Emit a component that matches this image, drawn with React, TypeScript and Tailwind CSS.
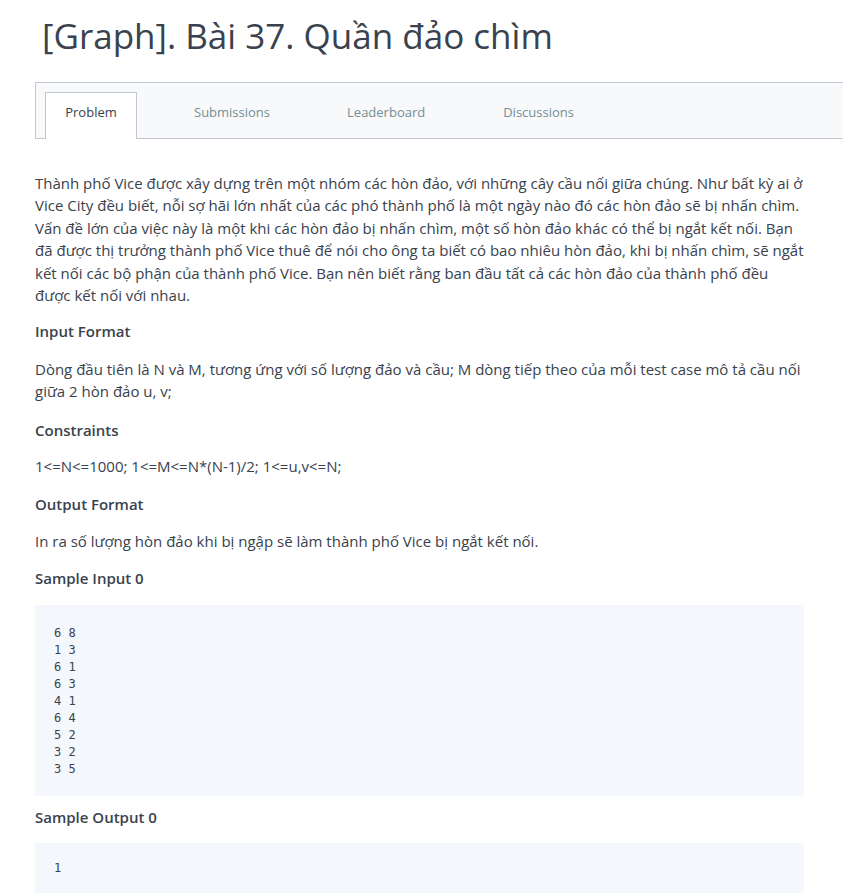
export default function App() {
  const sample = ["6 8", "1 3", "6 1", "6 3", "4 1", "6 4", "5 2", "3 2", "3 5"];

  return (
    <div className="min-h-screen bg-white text-[#39424e] font-['Open_Sans',sans-serif]">
      <h1 className="pl-[42px] pt-[12px] text-[35px] leading-[48px] font-normal">
        [Graph]. Bài 37. Quần đảo chìm
      </h1>

      <div className="ml-[35px] mt-[22px] h-[57px] border border-r-0 border-[#c2c7d0] bg-[#f8f9fa] flex items-end">
        <div className="ml-[9px] h-[47px] w-[92px] -mb-px bg-white border border-b-0 border-[#c2c7d0] flex justify-center pt-[10px] text-[13px] leading-[18px] text-[#39424e]">
          Problem
        </div>
        <div className="self-start pt-[20px] flex text-[13px] leading-[18px] text-[#738f93]">
          <span className="ml-[57px]">Submissions</span>
          <span className="ml-[77px]">Leaderboard</span>
          <span className="ml-[78px]">Discussions</span>
        </div>
      </div>

      <div className="ml-[35px] w-[769px] pt-[33px] text-[15px] leading-[22.4px] text-[#39424e]">
        <p>
          Thành phố Vice được xây dựng trên một nhóm các hòn đảo, với những cây cầu nối giữa chúng. Như bất kỳ ai ở
          Vice City đều biết, nỗi sợ hãi lớn nhất của các phó thành phố là một ngày nào đó các hòn đảo sẽ bị nhấn chìm.
          Vấn đề lớn của việc này là một khi các hòn đảo bị nhấn chìm, một số hòn đảo khác có thể bị ngắt kết nối. Bạn
          đã được thị trưởng thành phố Vice thuê để nói cho ông ta biết có bao nhiêu hòn đảo, khi bị nhấn chìm, sẽ ngắt
          kết nối các bộ phận của thành phố Vice. Bạn nên biết rằng ban đầu tất cả các hòn đảo của thành phố đều
          được kết nối với nhau.
        </p>

        <h3 className="mt-[14px] font-semibold">Input Format</h3>
        <p className="mt-[15px]">
          Dòng đầu tiên là N và M, tương ứng với số lượng đảo và cầu; M dòng tiếp theo của mỗi test case mô tả cầu nối
          giữa 2 hòn đảo u, v;
        </p>

        <h3 className="mt-[16px] font-semibold">Constraints</h3>
        <p className="mt-[14px]">1&lt;=N&lt;=1000; 1&lt;=M&lt;=N*(N-1)/2; 1&lt;=u,v&lt;=N;</p>

        <h3 className="mt-[16px] font-semibold">Output Format</h3>
        <p className="mt-[14px]">In ra số lượng hòn đảo khi bị ngập sẽ làm thành phố Vice bị ngắt kết nối.</p>

        <h3 className="mt-[15px] font-semibold">Sample Input 0</h3>
        <pre className="mt-[15px] bg-[#f4f8fc] px-[19px] pt-[20px] pb-[18px] font-['DejaVu_Sans_Mono',monospace] text-[12px] leading-[17px] text-[#39424e]">
          {sample.join("\n")}
        </pre>

        <h3 className="mt-[10px] font-semibold">Sample Output 0</h3>
        <pre className="mt-[15px] bg-[#f4f8fc] px-[19px] pt-[17px] pb-[22px] font-['DejaVu_Sans_Mono',monospace] text-[12px] leading-[17px] text-[#39424e]">
          1
        </pre>
      </div>
    </div>
  );
}
